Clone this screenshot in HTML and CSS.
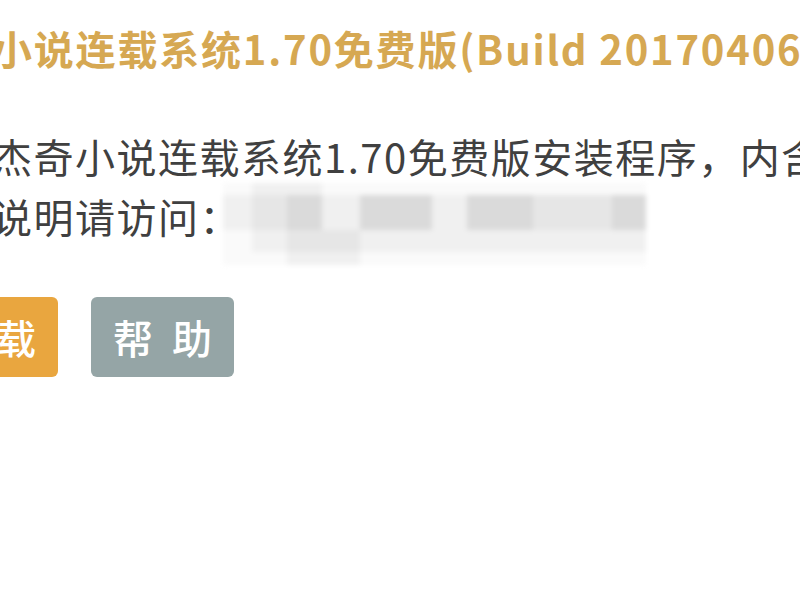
FILE: index.html
```html
<!DOCTYPE html>
<html lang="zh-CN">
<head>
<meta charset="utf-8">
<title>杰奇小说连载系统1.70免费版</title>
<link rel="stylesheet" href="styles.css">
</head>
<body>
<div class="page">
  <h1 class="title">小说连载系统1.70免费版(Build 20170406)</h1>
  <p class="desc">杰奇小说连载系统1.70免费版安装程序，内含详细安装说明<br>说明请访问：<span class="blur" aria-hidden="true"><i class="s0"></i><i class="s1"></i><i class="s1"></i><i class="s0"></i><i class="s0"></i><i class="s0"></i><i class="s0"></i><i class="s0"></i><i class="s0"></i><i class="s1"></i><i class="s2"></i><i class="s3"></i><i class="s1"></i><i class="s3"></i><i class="s1"></i><i class="s3"></i><i class="s2"></i><i class="s3"></i><i class="s0"></i><i class="s1"></i><i class="s2"></i><i class="s2"></i><i class="s1"></i><i class="s1"></i><i class="s1"></i><i class="s1"></i><i class="s1"></i><i class="s0"></i><i class="s0"></i><i class="s1"></i><i class="s1"></i><i class="s0"></i><i class="s0"></i><i class="s0"></i><i class="s0"></i><i class="s0"></i></span></p>
  <div class="actions">
    <a class="btn btn-download">下 载</a>
    <a class="btn btn-help">帮 助</a>
  </div>
</div>
</body>
</html>
```

FILE: styles.css
```css
html, body {
  margin: 0;
  padding: 0;
  background: #ffffff;
  width: 800px;
  height: 600px;
  overflow: hidden;
}

.page {
  font-family: "Noto Sans CJK SC", "Noto Sans", sans-serif;
  margin-left: -8px;
  padding-top: 22px;
  white-space: nowrap;
}

.title {
  margin: 0;
  font-size: 40px;
  line-height: 52px;
  font-weight: 700;
  color: #d6a852;
  letter-spacing: 1.8px;
}

.desc {
  margin: 52px 0 0 0;
  font-size: 40px;
  line-height: 60px;
  color: #404040;
  letter-spacing: 1.5px;
}

.blur {
  display: inline-grid;
  grid-template-columns: 29px 35px 35px 38px 72px 35px 66px 79px 34px;
  grid-template-rows: 12px 35px 22px 13px;
  vertical-align: top;
  margin: -3px 0 -20px -18px;
  filter: blur(2.5px);
  border-radius: 30px 0 0 30px;
}

.blur i { display: block; }
.blur .s0 { background: #fafafa; }
.blur .s1 { background: #f0f0f0; }
.blur .s2 { background: #e6e6e6; }
.blur .s3 { background: #dadada; }

.actions {
  display: flex;
  gap: 33px;
  margin-top: 51px;
  margin-left: -77px;
}

.btn {
  display: block;
  height: 80px;
  line-height: 80px;
  padding: 0 22px;
  border-radius: 6px;
  color: #ffffff;
  font-size: 40px;
  font-weight: 500;
  word-spacing: 10px;
  text-decoration: none;
}

.btn-download { background: #e9a63f; }
.btn-help { background: #95a5a6; }
```
